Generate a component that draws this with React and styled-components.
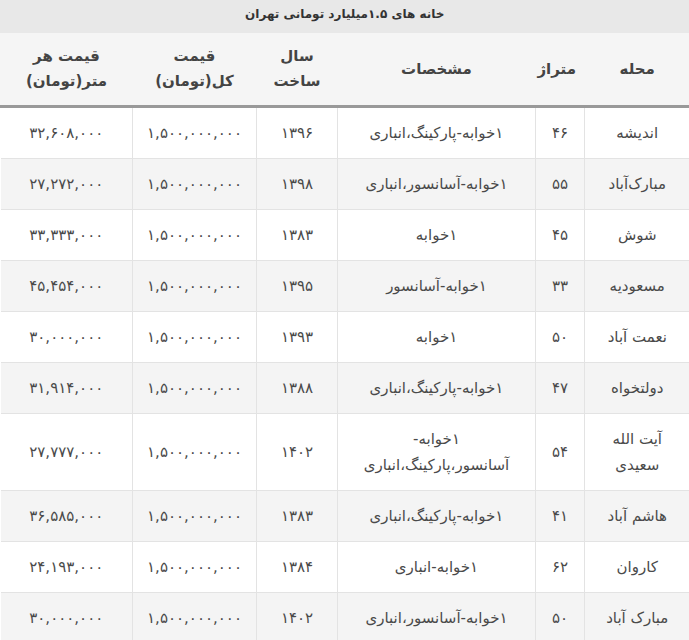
import React from 'react';
import styled, { createGlobalStyle } from 'styled-components';

const GlobalStyle = createGlobalStyle`
  html, body {
    margin: 0;
    padding: 0;
    background: #fff;
  }
  body {
    font-family: "DejaVu Sans", "Noto Sans", sans-serif;
  }
`;

const Table = styled.table`
  width: 689px;
  direction: rtl;
  border-collapse: collapse;
  table-layout: fixed;
  color: #4a4a4a;
  font-size: 15px;
`;

const Caption = styled.caption`
  background: #e8e8e8;
  color: #333;
  font-weight: 700;
  font-size: 12px;
  height: 33px;
  line-height: 28px;
  text-align: center;
  vertical-align: top;
`;

const HeadRow = styled.tr`
  background: #f5f5f5;
  border-bottom: 3px solid #999;
`;

const Th = styled.th`
  font-weight: 700;
  font-size: 15px;
  color: #444;
  line-height: 25px;
  padding: 10px 8px;
  height: 52px;
  text-align: center;
  border-left: 1px solid #f5f5f5;
`;

const Row = styled.tr`
  background: ${(p) => (p.$striped ? '#f4f4f4' : '#fff')};
  border-bottom: 1px solid #e3e3e3;
`;

const Td = styled.td`
  text-align: center;
  line-height: 26px;
  padding: 12px 8px;
  white-space: pre-line;
  border-left: 1px solid #e3e3e3;
  &:last-child {
    border-left: none;
  }
`;

const widths = [105, 49, 198, 81, 124, 132];

const rows = [
  ['اندیشه', '۴۶', '۱خوابه-پارکینگ،انباری', '۱۳۹۶', '۳۲,۶۰۸,۰۰۰'],
  ['مبارک‌آباد', '۵۵', '۱خوابه-آسانسور،انباری', '۱۳۹۸', '۲۷,۲۷۲,۰۰۰'],
  ['شوش', '۴۵', '۱خوابه', '۱۳۸۳', '۳۳,۳۳۳,۰۰۰'],
  ['مسعودیه', '۳۳', '۱خوابه-آسانسور', '۱۳۹۵', '۴۵,۴۵۴,۰۰۰'],
  ['نعمت آباد', '۵۰', '۱خوابه', '۱۳۹۳', '۳۰,۰۰۰,۰۰۰'],
  ['دولتخواه', '۴۷', '۱خوابه-پارکینگ،انباری', '۱۳۸۸', '۳۱,۹۱۴,۰۰۰'],
  ['آیت الله\nسعیدی', '۵۴', '۱خوابه-\nآسانسور،پارکینگ،انباری', '۱۴۰۲', '۲۷,۷۷۷,۰۰۰'],
  ['هاشم آباد', '۴۱', '۱خوابه-پارکینگ،انباری', '۱۳۸۳', '۳۶,۵۸۵,۰۰۰'],
  ['کاروان', '۶۲', '۱خوابه-انباری', '۱۳۸۴', '۲۴,۱۹۳,۰۰۰'],
  ['مبارک آباد', '۵۰', '۱خوابه-آسانسور،انباری', '۱۴۰۲', '۳۰,۰۰۰,۰۰۰'],
];

export default function App() {
  return (
    <>
      <GlobalStyle />
      <Table>
        <Caption>خانه های ۱.۵میلیارد تومانی تهران</Caption>
        <colgroup>
          {widths.map((w, i) => (
            <col key={i} style={{ width: w }} />
          ))}
        </colgroup>
        <thead>
          <HeadRow>
            <Th>محله</Th>
            <Th>متراژ</Th>
            <Th>مشخصات</Th>
            <Th>سال<br />ساخت</Th>
            <Th>قیمت<br />کل(تومان)</Th>
            <Th>قیمت هر<br />متر(تومان)</Th>
          </HeadRow>
        </thead>
        <tbody>
          {rows.map((r, i) => (
            <Row key={i} $striped={i % 2 === 1}>
              <Td>{r[0]}</Td>
              <Td>{r[1]}</Td>
              <Td>{r[2]}</Td>
              <Td>{r[3]}</Td>
              <Td>۱,۵۰۰,۰۰۰,۰۰۰</Td>
              <Td>{r[4]}</Td>
            </Row>
          ))}
        </tbody>
      </Table>
    </>
  );
}
